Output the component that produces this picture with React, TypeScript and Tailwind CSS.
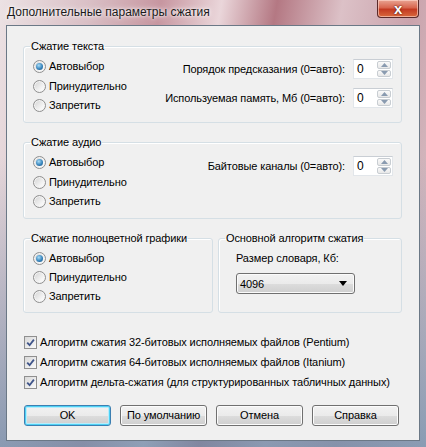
import React from "react";

function Radio({ checked, label, h }: { checked?: boolean; label: string; h: string }) {
  return (
    <div className={`flex items-center ${h}`}>
      <span className="flex items-center justify-center w-[13px] h-[13px] rounded-full border border-[#8f8f8f] bg-[linear-gradient(135deg,#d2d2d2,#f6f6f6_70%,#ffffff)] shadow-[inset_0_0_0_1px_#f4f4f4]">
        {checked && (
          <span className="w-[7px] h-[7px] rounded-full bg-[radial-gradient(circle_at_40%_35%,#a8dcf7,#3a86bd_55%,#154f80)]" />
        )}
      </span>
      <span className="ml-[3px]">{label}</span>
    </div>
  );
}

function Check({ label }: { label: string }) {
  return (
    <div className="flex items-center h-[20px]">
      <span className="flex items-center justify-center w-[13px] h-[13px] border border-[#8f8f8f] bg-white">
        <span className="flex items-center justify-center w-[11px] h-[11px] bg-[linear-gradient(135deg,#d8d8d8,#fafafa)]">
          <svg width="9" height="9" viewBox="0 0 9 9">
            <path d="M1.2 4.6 L3.6 7.2 L7.9 1.6" fill="none" stroke="#40558a" strokeWidth="1.8" />
          </svg>
        </span>
      </span>
      <span className="ml-[3px]">{label}</span>
    </div>
  );
}

function Spin() {
  return (
    <div className="flex w-[40px] h-[20px] border border-[#e2e6ea] border-t-[#c9ced4] bg-white">
      <span className="flex-1 pl-[3px] leading-[18px] text-[12px]">0</span>
      <div className="flex flex-col w-[16px] p-[1px] gap-[1px]">
        <div className="flex-1 flex items-center justify-center rounded-[2px] border border-[#c8cdd2] bg-[linear-gradient(#fafafa,#e8e8e8)]">
          <svg width="7" height="4" viewBox="0 0 7 4">
            <path d="M0 4 L3.5 0 L7 4 Z" fill="#8a9bb0" />
          </svg>
        </div>
        <div className="flex-1 flex items-center justify-center rounded-[2px] border border-[#c8cdd2] bg-[linear-gradient(#fafafa,#e8e8e8)]">
          <svg width="7" height="4" viewBox="0 0 7 4">
            <path d="M0 0 L3.5 4 L7 0 Z" fill="#8a9bb0" />
          </svg>
        </div>
      </div>
    </div>
  );
}

function Btn({ label, def }: { label: string; def?: boolean }) {
  return (
    <div
      className={`flex items-center justify-center w-[87px] h-[21px] rounded-[3px] border ${
        def
          ? "border-[#3c7fb1] shadow-[inset_0_0_0_1px_#4ed1f5,inset_0_0_0_2px_#b8ecfb]"
          : "border-[#707070] shadow-[inset_0_0_0_1px_#fcfcfc]"
      } bg-[linear-gradient(#f2f2f2_0%,#ebebeb_50%,#dddddd_51%,#cfcfcf_100%)]`}
    >
      {label}
    </div>
  );
}

const legend = "ml-[6px] px-[1px] leading-[16px]";
const fs = "border border-[#d5dfe5] rounded-[3px] shadow-[inset_1px_1px_0_#ffffff]";

export default function App() {
  return (
    <div className="w-[426px] h-[447px] font-['Liberation_Sans',sans-serif] text-[11px] tracking-[-0.1px] text-black flex flex-col px-[6px] pb-[6px] bg-[linear-gradient(to_bottom,rgba(0,0,0,0)_0%,rgba(0,0,0,0)_35%,rgba(110,140,170,0.75)_100%),linear-gradient(100deg,#ece2e4_0%,#d9bfc5_18%,#c796a0_32%,#ead6da_44%,#b47883_55%,#dcc1c7_68%,#caa3ac_82%,#dccbcf_100%)]">
      <div className="h-[25px] flex items-start">
        <span className="mt-[3px] ml-[1px] leading-[18px] text-[12px] tracking-normal text-[#1a1a1a] [text-shadow:0_0_6px_#ffffff,0_0_3px_#ffffff]">
          Дополнительные параметры сжатия
        </span>
        <div className="ml-auto mr-[1px] w-[42px] h-[18px] rounded-b-[4px] border border-[#5a2a2a] border-t-0 bg-[linear-gradient(#e9a493_0%,#d8664f_45%,#c33a22_55%,#d9693c_100%)] shadow-[inset_0_0_0_1px_rgba(255,220,210,0.6)] flex items-center justify-center">
          <span className="text-white font-bold text-[15px] leading-none font-['Liberation_Sans',sans-serif] [text-shadow:0_0_2px_#5a1a10,0_0_1px_#5a1a10]">
            x
          </span>
        </div>
      </div>
      <div className="flex-1 border border-[#6b7886] bg-[#f0f0f0] pl-[16px] pr-[17px] pt-[12px] flex flex-col">
        <fieldset className={`${fs} h-[85px]`}>
          <legend className={legend}>Сжатие текста</legend>
          <div className="flex">
            <div className="flex flex-col pl-[9px] pt-[2px]">
              <Radio checked label="Автовыбор" h="h-[20px]" />
              <Radio label="Принудительно" h="h-[20px]" />
              <Radio label="Запретить" h="h-[19px]" />
            </div>
            <div className="ml-auto pr-[8px] pt-[5px] flex flex-col gap-[9px]">
              <div className="flex items-center justify-end gap-[8px]">
                <span className="whitespace-nowrap">Порядок предсказания (0=авто):</span>
                <Spin />
              </div>
              <div className="flex items-center justify-end gap-[8px]">
                <span className="whitespace-nowrap">Используемая память, Мб (0=авто):</span>
                <Spin />
              </div>
            </div>
          </div>
        </fieldset>

        <fieldset className={`${fs} h-[85px] mt-[11px]`}>
          <legend className={legend}>Сжатие аудио</legend>
          <div className="flex">
            <div className="flex flex-col pl-[9px] pt-[2px]">
              <Radio checked label="Автовыбор" h="h-[20px]" />
              <Radio label="Принудительно" h="h-[20px]" />
              <Radio label="Запретить" h="h-[19px]" />
            </div>
            <div className="ml-auto pr-[8px] pt-[6px] flex flex-col">
              <div className="flex items-center justify-end gap-[8px]">
                <span className="whitespace-nowrap">Байтовые каналы (0=авто):</span>
                <Spin />
              </div>
            </div>
          </div>
        </fieldset>

        <div className="flex gap-[5px] mt-[11px]">
          <fieldset className={`${fs} h-[83px] w-[190px]`}>
            <legend className={`${legend} whitespace-nowrap`}>Сжатие полноцветной графики</legend>
            <div className="flex flex-col pl-[9px] pt-[2px]">
              <Radio checked label="Автовыбор" h="h-[20px]" />
              <Radio label="Принудительно" h="h-[19px]" />
              <Radio label="Запретить" h="h-[19px]" />
            </div>
          </fieldset>
          <fieldset className={`${fs} h-[83px] flex-1`}>
            <legend className={`${legend} whitespace-nowrap`}>Основной алгоритм сжатия</legend>
            <div className="flex flex-col pl-[17px] pt-[4px]">
              <span className="leading-[16px]">Размер словаря, Кб:</span>
              <div className="mt-[7px] w-[119px] h-[21px] rounded-[3px] border border-[#707070] bg-[linear-gradient(#f2f2f2_0%,#ebebeb_50%,#dddddd_51%,#cfcfcf_100%)] shadow-[inset_0_0_0_1px_#fbfbfb] flex items-center pl-[3px] pr-[7px]">
                <span className="leading-[16px]">4096</span>
                <svg className="ml-auto" width="8" height="5" viewBox="0 0 8 5">
                  <path d="M0 0 L8 0 L4 5 Z" fill="#000" />
                </svg>
              </div>
            </div>
          </fieldset>
        </div>

        <div className="flex flex-col mt-[19px] pl-[1px] whitespace-nowrap">
          <Check label="Алгоритм сжатия 32-битовых исполняемых файлов (Pentium)" />
          <Check label="Алгоритм сжатия 64-битовых исполняемых файлов (Itanium)" />
          <Check label="Алгоритм дельта-сжатия (для структурированных табличных данных)" />
        </div>

        <div className="flex gap-[9px] mt-[13px] pl-[1px] whitespace-nowrap">
          <Btn label="OK" def />
          <Btn label="По умолчанию" />
          <Btn label="Отмена" />
          <Btn label="Справка" />
        </div>
      </div>
    </div>
  );
}
